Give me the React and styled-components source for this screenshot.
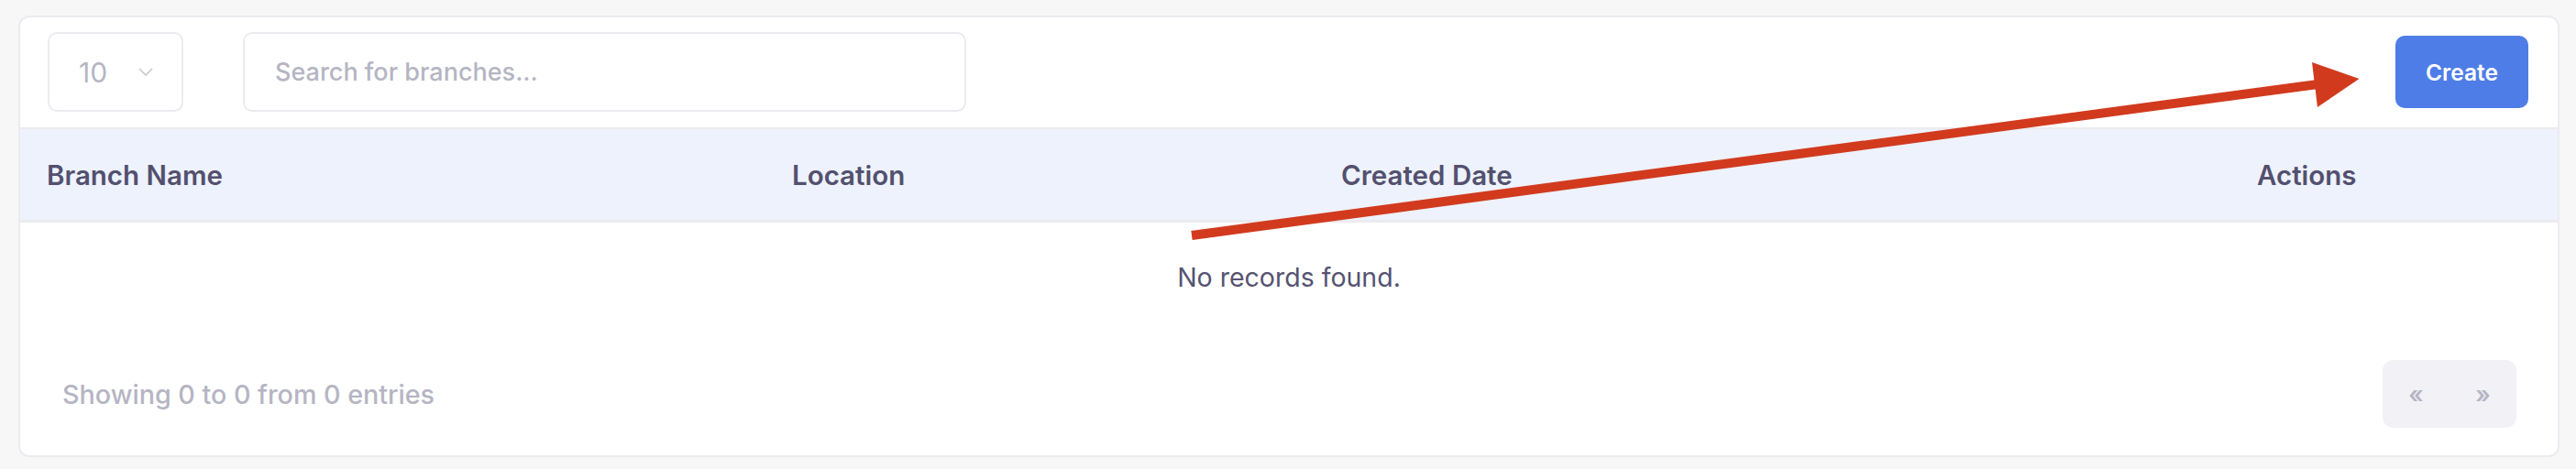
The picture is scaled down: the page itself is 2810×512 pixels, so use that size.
import styled, { createGlobalStyle } from "styled-components";

const GlobalStyle = createGlobalStyle`
  body {
    margin: 0;
    background: #f7f7f8;
    font-family: Inter, "Noto Sans", sans-serif;
  }
`;

const Page = styled.div`
  position: relative;
  width: 2810px;
  height: 512px;
  box-sizing: border-box;
  padding: 17px 18px 0 20px;
`;

const Card = styled.div`
  background: #ffffff;
  border: 2px solid #ebebf0;
  border-radius: 12px;
  overflow: hidden;
  height: 482px;
  box-sizing: border-box;
  display: flex;
  flex-direction: column;
`;

const Toolbar = styled.div`
  display: flex;
  align-items: center;
  padding: 16px 32px 17px 30px;
  gap: 65px;
`;

const SelectBox = styled.div`
  width: 148px;
  height: 87px;
  box-sizing: border-box;
  border: 2px solid #ebebf0;
  border-radius: 10px;
  display: flex;
  align-items: center;
  padding-left: 32px;
  gap: 34px;
  font-size: 30px;
  color: #b5b5c3;
`;

const SearchBox = styled.div`
  width: 789px;
  height: 87px;
  box-sizing: border-box;
  border: 2px solid #ebebf0;
  border-radius: 10px;
  display: flex;
  align-items: center;
  padding-left: 33px;
  font-size: 27px;
  font-weight: 500;
  color: #b5b5c3;
`;

const CreateButton = styled.button`
  margin-left: auto;
  width: 145px;
  height: 79px;
  border: none;
  border-radius: 10px;
  background: #4e7de8;
  color: #ffffff;
  font-family: Inter, sans-serif;
  font-size: 24.5px;
  font-weight: 600;
`;

const HeadRow = styled.div`
  display: grid;
  grid-template-columns: 813px 599px 999px 1fr;
  background: #edf2fd;
  border-top: 2px solid #ebebf0;
  border-bottom: 3px solid #ebebf0;
  height: 104px;
  box-sizing: border-box;
  align-items: center;
`;

const HeadCell = styled.div`
  padding-left: 29px;
  font-size: 29.5px;
  font-weight: 600;
  color: #53506e;
`;

const EmptyRow = styled.div`
  text-align: center;
  padding: 40px 0 39px;
  line-height: 40px;
  font-size: 28.5px;
  color: #565371;
`;

const Footer = styled.div`
  display: flex;
  align-items: center;
  justify-content: space-between;
  padding: 31px 45px 28px 46px;
`;

const Info = styled.div`
  font-size: 28.7px;
  font-weight: 500;
  color: #b5b5c3;
`;

const Pager = styled.div`
  display: flex;
  background: #f1f1f6;
  border-radius: 12px;
  height: 74px;
`;

const PageButton = styled.div`
  width: 73px;
  display: flex;
  align-items: center;
  justify-content: center;
  font-size: 26px;
  font-weight: 600;
  color: #b5b5c3;
`;

const Annotation = styled.svg`
  position: absolute;
  left: 0;
  top: 0;
  pointer-events: none;
`;

export default function App() {
  return (
    <>
      <GlobalStyle />
      <Page>
        <Card>
          <Toolbar>
            <SelectBox>
              <span>10</span>
              <svg width="16" height="9" viewBox="0 0 16 9">
                <polyline points="1,1 8,8 15,1" fill="none" stroke="#c7c7d2" strokeWidth="1.6" />
              </svg>
            </SelectBox>
            <SearchBox>Search for branches...</SearchBox>
            <CreateButton>Create</CreateButton>
          </Toolbar>
          <HeadRow>
            <HeadCell>Branch Name</HeadCell>
            <HeadCell>Location</HeadCell>
            <HeadCell>Created Date</HeadCell>
            <HeadCell>Actions</HeadCell>
          </HeadRow>
          <EmptyRow>No records found.</EmptyRow>
          <Footer>
            <Info>Showing 0 to 0 from 0 entries</Info>
            <Pager>
              <PageButton>«</PageButton>
              <PageButton>»</PageButton>
            </Pager>
          </Footer>
        </Card>
        <Annotation width="2810" height="512" viewBox="0 0 2810 512">
          <line x1="1300" y1="257" x2="2530" y2="91.8" stroke="#d23a1e" strokeWidth="10" />
          <polygon points="2522,68 2573.5,86 2528,117" fill="#d23a1e" />
        </Annotation>
      </Page>
    </>
  );
}
